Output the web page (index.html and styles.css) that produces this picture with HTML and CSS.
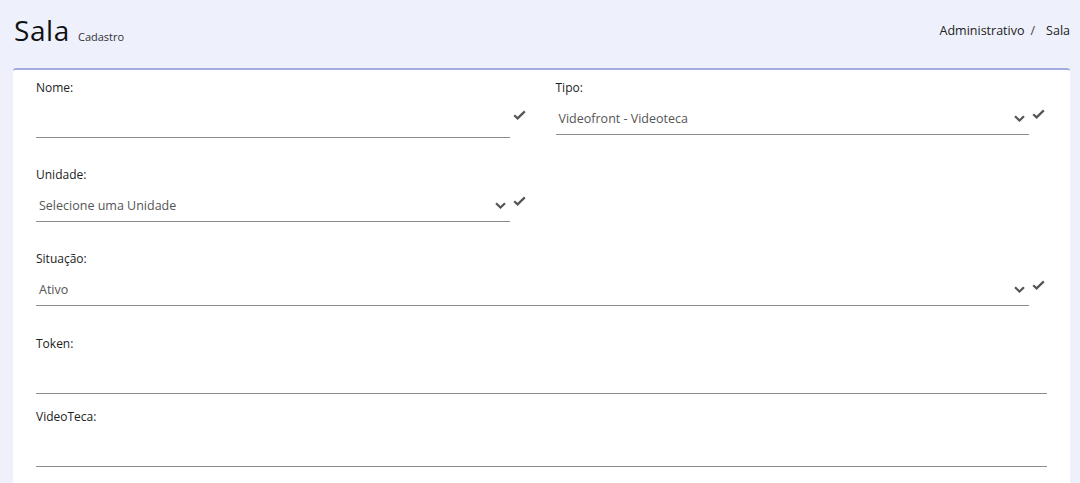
FILE: index.html
```html
<!DOCTYPE html>
<html lang="pt-BR">
<head>
<meta charset="utf-8">
<title>Sala - Cadastro</title>
<link rel="stylesheet" href="styles.css">
</head>
<body>
<header class="page-header">
  <div class="title-group">
    <h1 class="title">Sala</h1>
    <span class="subtitle">Cadastro</span>
  </div>
  <nav class="breadcrumb">
    <span>Administrativo</span>
    <span class="sep">/</span>
    <span>Sala</span>
  </nav>
</header>

<main class="card">
  <div class="form-row">
    <div class="col">
      <label class="label">Nome:</label>
      <div class="control">
        <div class="input"></div>
        <span class="check check-input">
          <svg viewBox="0 0 13 10" width="13" height="10"><polyline points="1.2,5.2 4.6,8.4 11.8,1.4" fill="none" stroke="#555" stroke-width="2.2"/></svg>
        </span>
      </div>
    </div>
    <div class="col">
      <label class="label">Tipo:</label>
      <div class="control">
        <div class="select">
          <span class="select-text">Videofront - Videoteca</span>
          <svg class="chevron" viewBox="0 0 11 7" width="11" height="7"><polyline points="1,1.2 5.5,5.5 10,1.2" fill="none" stroke="#555" stroke-width="2.2"/></svg>
        </div>
        <span class="check check-select">
          <svg viewBox="0 0 13 10" width="13" height="10"><polyline points="1.2,5.2 4.6,8.4 11.8,1.4" fill="none" stroke="#555" stroke-width="2.2"/></svg>
        </span>
      </div>
    </div>
  </div>

  <div class="form-row">
    <div class="col">
      <label class="label">Unidade:</label>
      <div class="control">
        <div class="select">
          <span class="select-text">Selecione uma Unidade</span>
          <svg class="chevron" viewBox="0 0 11 7" width="11" height="7"><polyline points="1,1.2 5.5,5.5 10,1.2" fill="none" stroke="#555" stroke-width="2.2"/></svg>
        </div>
        <span class="check check-select">
          <svg viewBox="0 0 13 10" width="13" height="10"><polyline points="1.2,5.2 4.6,8.4 11.8,1.4" fill="none" stroke="#555" stroke-width="2.2"/></svg>
        </span>
      </div>
    </div>
    <div class="col"></div>
  </div>

  <div class="form-row wide-gap">
    <div class="col">
      <label class="label">Situação:</label>
      <div class="control">
        <div class="select">
          <span class="select-text">Ativo</span>
          <svg class="chevron" viewBox="0 0 11 7" width="11" height="7"><polyline points="1,1.2 5.5,5.5 10,1.2" fill="none" stroke="#555" stroke-width="2.2"/></svg>
        </div>
        <span class="check check-select">
          <svg viewBox="0 0 13 10" width="13" height="10"><polyline points="1.2,5.2 4.6,8.4 11.8,1.4" fill="none" stroke="#555" stroke-width="2.2"/></svg>
        </span>
      </div>
    </div>
  </div>

  <div class="form-row tight">
    <div class="col">
      <label class="label">Token:</label>
      <div class="input"></div>
    </div>
  </div>

  <div class="form-row">
    <div class="col">
      <label class="label">VideoTeca:</label>
      <div class="input"></div>
    </div>
  </div>
</main>
</body>
</html>
```

FILE: styles.css
```css
* {
  box-sizing: border-box;
}

html, body {
  margin: 0;
  padding: 0;
}

body {
  background: #eef0fb;
  font-family: "Open Sans", "Liberation Sans", sans-serif;
  color: #222;
  height: 483px;
  overflow: hidden;
}

.page-header {
  height: 68px;
  display: flex;
  justify-content: space-between;
  align-items: center;
  padding: 0 10px 8px 14px;
}

.title-group {
  display: flex;
  align-items: baseline;
  gap: 8px;
}

.title {
  margin: 0;
  font-size: 28px;
  font-weight: 400;
  letter-spacing: 0.6px;
  color: #111;
  line-height: 34px;
}

.subtitle {
  font-size: 11px;
  color: #333;
}

.breadcrumb {
  display: flex;
  align-items: center;
  font-size: 12.5px;
  color: #222;
}

.breadcrumb .sep {
  margin: 0 11px 0 6px;
  color: #444;
}

.card {
  margin: 0 10px 0 13px;
  background: #fff;
  border-top: 2px solid #a3acdf;
  border-radius: 3px 3px 0 0;
  padding: 10px 23px 0 23px;
  height: 420px;
}

.form-row {
  display: flex;
  gap: 28px;
  margin-bottom: 29px;
}

.form-row.wide-gap {
  margin-bottom: 30px;
}

.form-row.tight {
  margin-bottom: 15px;
}

.col {
  flex: 1 1 0;
  min-width: 0;
  display: flex;
  flex-direction: column;
}

.label {
  display: block;
  font-size: 12px;
  line-height: 16px;
  color: #222;
}

.control {
  display: flex;
  align-items: flex-end;
}

.input {
  flex: 1 1 auto;
  height: 42px;
  border-bottom: 1px solid #8c8c8c;
}

.select {
  flex: 1 1 auto;
  height: 39px;
  border-bottom: 1px solid #8c8c8c;
  display: flex;
  align-items: flex-end;
  justify-content: space-between;
  padding: 0 4px 7px 3px;
}

.select-text {
  font-size: 12.5px;
  line-height: 16px;
  color: #555;
}

.chevron {
  display: block;
  margin-bottom: 5px;
}

.check {
  flex: 0 0 18px;
  display: flex;
  justify-content: flex-start;
  padding-left: 3px;
}

.check svg {
  display: block;
}

.check-input {
  margin-bottom: 18px;
}

.check-select {
  margin-bottom: 16px;
}
```
